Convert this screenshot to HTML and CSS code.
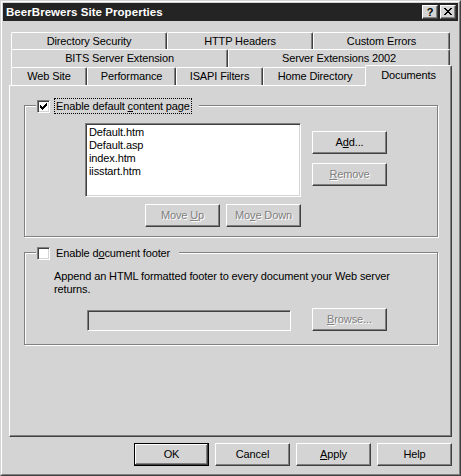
FILE: index.html
```html
<!DOCTYPE html>
<html>
<head>
<meta charset="utf-8">
<title>BeerBrewers Site Properties</title>
<link rel="stylesheet" href="styles.css">
</head>
<body>
<div class="window">
  <div class="frame">
    <div class="titlebar">
      <span class="title">BeerBrewers Site Properties</span>
      <div class="caption-btns">
        <span class="cap-btn help">?</span>
        <span class="cap-btn close"><svg width="8" height="7" viewBox="0 0 8 7"><path d="M0 0h2v1H0zM6 0h2v1H6zM1 1h2v1H1zM5 1h2v1H5zM2 2h4v1H2zM3 3h2v1H3zM2 4h4v1H2zM1 5h2v1H1zM5 5h2v1H5zM0 6h2v1H0zM6 6h2v1H6z" fill="#000"/></svg></span>
      </div>
    </div>
    <div class="client">
      <div class="tabs">
        <div class="tab-row r1">
          <div class="tab t-dirsec">Directory Security</div>
          <div class="tab t-http">HTTP Headers</div>
          <div class="tab t-errors">Custom Errors</div>
        </div>
        <div class="tab-row">
          <div class="tab t-bits">BITS Server Extension</div>
          <div class="tab t-ext">Server Extensions 2002</div>
        </div>
        <div class="tab-row">
          <div class="tab t-web">Web Site</div>
          <div class="tab t-perf">Performance</div>
          <div class="tab t-isapi">ISAPI Filters</div>
          <div class="tab t-home">Home Directory</div>
          <div class="tab t-docs sel">Documents</div>
        </div>
      </div>
      <div class="panel">
        <div class="group g1">
          <div class="group-head">
            <span class="check"><svg width="11" height="11" viewBox="0 0 11 11"><path d="M2 4V7H3V8H4V9H5V8H6V7H7V6H8V5H9V2H8V3H7V4H6V5H5V6H4V5H3V4Z" fill="#000"/></svg></span>
            <span class="label focus">Enable default <u>c</u>ontent page</span>
          </div>
          <div class="g1-body">
            <div class="list-col">
              <div class="listbox">
                <div>Default.htm</div>
                <div>Default.asp</div>
                <div>index.htm</div>
                <div>iisstart.htm</div>
              </div>
              <div class="move-row">
                <button class="btn disabled">Move <u>U</u>p</button>
                <button class="btn disabled">Mo<u>v</u>e Down</button>
              </div>
            </div>
            <div class="side-col">
              <button class="btn">A<u>d</u>d...</button>
              <button class="btn disabled"><u>R</u>emove</button>
            </div>
          </div>
        </div>
        <div class="group g2">
          <div class="group-head">
            <span class="check"></span>
            <span class="label">Enable d<u>o</u>cument footer</span>
          </div>
          <div class="g2-body">
            <div class="desc">Append an HTML formatted footer to every document your Web server returns.</div>
            <div class="footer-row">
              <div class="textbox"></div>
              <button class="btn disabled"><u>B</u>rowse...</button>
            </div>
          </div>
        </div>
      </div>
      <div class="dlg-btns">
        <button class="btn default">OK</button>
        <button class="btn">Cancel</button>
        <button class="btn"><u>A</u>pply</button>
        <button class="btn">Help</button>
      </div>
    </div>
  </div>
</div>
</body>
</html>
```

FILE: styles.css
```css
* { box-sizing: border-box; }
html, body { margin: 0; padding: 0; }
body {
  background: #d4d4d4;
  font-family: "Liberation Sans", Arial, sans-serif;
  font-size: 11px;
  letter-spacing: -0.12px;
  color: #000;
}
.window {
  width: 461px;
  height: 476px;
  border: 1px solid;
  border-color: #d4d4d4 #404040 #404040 #d4d4d4;
  background: #d4d4d4;
}
.frame {
  height: 100%;
  border: 1px solid;
  border-color: #fff #808080 #808080 #fff;
  padding: 1px;
  display: flex;
  flex-direction: column;
}
.titlebar {
  height: 18px;
  flex: none;
  background: #242424;
  display: flex;
  align-items: center;
  justify-content: space-between;
  padding: 0 2px 0 3px;
}
.title {
  color: #fff;
  font-weight: bold;
  font-size: 11.5px;
  letter-spacing: 0.05px;
  line-height: 18px;
}
.caption-btns { display: flex; gap: 2px; }
.cap-btn {
  width: 16px;
  height: 14px;
  background: #d4d4d4;
  border: 1px solid;
  border-color: #fff #404040 #404040 #fff;
  box-shadow: inset -1px -1px #808080;
  display: flex;
  align-items: center;
  justify-content: center;
  font-weight: bold;
  font-size: 11px;
  line-height: 12px;
}
.cap-btn svg { display: block; margin-top: -1px; }
.client {
  flex: 1;
  padding: 11px 6px 0 6px;
  display: flex;
  flex-direction: column;
}
.tabs { padding: 0 2px; }
.tab-row { display: flex; height: 18px; }
.tab-row.r1 { height: 17px; }
.tab {
  height: 100%;
  flex: none;
  border-top: 1px solid #fff;
  border-left: 1px solid #fff;
  border-right: 1px solid #404040;
  box-shadow: inset -1px 0 #808080;
  border-radius: 2px 2px 0 0;
  background: #d4d4d4;
  text-align: center;
  line-height: 16px;
  white-space: nowrap;
}
.tab.sel {
  height: 21px;
  margin: -2px -2px -1px -2px;
  position: relative;
  z-index: 1;
  line-height: 18px;
}
.t-dirsec { width: 156px; }
.t-http { width: 146px; }
.t-errors { width: 137px; }
.t-bits { width: 217px; }
.t-ext { width: 222px; }
.t-web { width: 76px; }
.t-perf { width: 89px; }
.t-isapi { width: 87px; }
.t-home { width: 104px; }
.t-docs { width: 87px; }
.panel {
  height: 352px;
  flex: none;
  border: 1px solid;
  border-color: #fff #404040 #404040 #fff;
  box-shadow: inset -1px -1px #808080;
  padding: 19px 0 0 14px;
}
.group {
  width: 414px;
  border: 1px solid #808080;
  box-shadow: inset 1px 1px #fff, 1px 1px #fff;
}
.g2 { margin-top: 15px; }
.group-head {
  display: flex;
  align-items: center;
  gap: 4px;
  width: fit-content;
  height: 16px;
  margin: -8px 0 0 11px;
  padding: 0 7px 0 1px;
  background: #d4d4d4;
}
.check {
  display: block;
  width: 13px;
  height: 13px;
  flex: none;
  background: #fff;
  border: 1px solid;
  border-color: #808080 #fff #fff #808080;
  box-shadow: inset 1px 1px #404040, inset -1px -1px #d4d4d4;
}
.check svg { display: block; }
.label {
  border: 1px dotted transparent;
  padding: 0 1px;
  line-height: 14px;
  white-space: nowrap;
}
.label.focus { border-color: #000; }
.g1-body {
  display: flex;
  padding: 9px 0 9px 60px;
}
.listbox {
  width: 216px;
  height: 74px;
  background: #fff;
  border: 1px solid;
  border-color: #808080 #fff #fff #808080;
  box-shadow: inset 1px 1px #404040, inset -1px -1px #d4d4d4;
  padding: 2px 0 0 3px;
  line-height: 13px;
}
.move-row {
  display: flex;
  justify-content: flex-end;
  gap: 6px;
  margin-top: 7px;
}
.side-col {
  display: flex;
  flex-direction: column;
  gap: 9px;
  margin-left: 11px;
  padding-top: 8px;
}
.btn {
  width: 75px;
  height: 23px;
  flex: none;
  margin: 0;
  padding: 0;
  border: 1px solid;
  border-color: #fff #404040 #404040 #fff;
  border-radius: 0;
  box-shadow: inset -1px -1px #808080;
  background: #d4d4d4;
  font-family: "Liberation Sans", Arial, sans-serif;
  font-size: 11px;
  letter-spacing: -0.12px;
  line-height: 13px;
  color: #000;
  text-align: center;
}
.btn.disabled {
  color: #808080;
  text-shadow: 1px 1px #fff;
}
.btn.default {
  border-color: #000;
  box-shadow: inset -1px -1px #404040, inset 1px 1px #fff, inset -2px -2px #808080;
}
.g2-body { padding: 9px 0 13px 29px; }
.desc { width: 365px; line-height: 13px; }
.footer-row {
  display: flex;
  align-items: flex-end;
  gap: 21px;
  margin: 12px 0 0 33px;
}
.textbox {
  width: 204px;
  height: 21px;
  border: 1px solid;
  border-color: #808080 #fff #fff #808080;
  box-shadow: inset 1px 1px #404040, inset -1px -1px #d4d4d4;
  background: #d4d4d4;
}
.dlg-btns {
  display: flex;
  justify-content: flex-end;
  gap: 6px;
  margin-top: 6px;
}
```
